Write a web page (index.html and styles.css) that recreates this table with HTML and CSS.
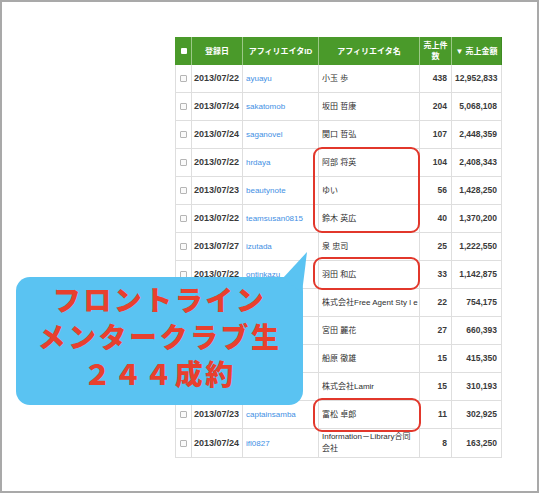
FILE: index.html
```html
<!DOCTYPE html>
<html lang="ja">
<head>
<meta charset="utf-8">
<link rel="stylesheet" href="styles.css">
</head>
<body>
<div class="frame">
  <table class="sales">
    <thead>
      <tr>
        <th class="c-chk"><span class="hbox"></span></th>
        <th class="c-date">登録日</th>
        <th class="c-id">アフィリエイタID</th>
        <th class="c-name">アフィリエイタ名</th>
        <th class="c-cnt">売上件数</th>
        <th class="c-amt">▼ 売上金額</th>
      </tr>
    </thead>
    <tbody>
      <tr><td class="chk"><span class="box"></span></td><td class="date">2013/07/22</td><td class="id"><a>ayuayu</a></td><td class="name">小玉 歩</td><td class="num">438</td><td class="num">12,952,833</td></tr>
      <tr><td class="chk"><span class="box"></span></td><td class="date">2013/07/24</td><td class="id"><a>sakatomob</a></td><td class="name">坂田 哲康</td><td class="num">204</td><td class="num">5,068,108</td></tr>
      <tr><td class="chk"><span class="box"></span></td><td class="date">2013/07/24</td><td class="id"><a>saganovel</a></td><td class="name">関口 哲弘</td><td class="num">107</td><td class="num">2,448,359</td></tr>
      <tr><td class="chk"><span class="box"></span></td><td class="date">2013/07/22</td><td class="id"><a>hrdaya</a></td><td class="name">阿部 将英</td><td class="num">104</td><td class="num">2,408,343</td></tr>
      <tr><td class="chk"><span class="box"></span></td><td class="date">2013/07/23</td><td class="id"><a>beautynote</a></td><td class="name">ゆい</td><td class="num">56</td><td class="num">1,428,250</td></tr>
      <tr><td class="chk"><span class="box"></span></td><td class="date">2013/07/22</td><td class="id"><a>teamsusan0815</a></td><td class="name">鈴木 英広</td><td class="num">40</td><td class="num">1,370,200</td></tr>
      <tr><td class="chk"><span class="box"></span></td><td class="date">2013/07/27</td><td class="id"><a>izutada</a></td><td class="name">泉 忠司</td><td class="num">25</td><td class="num">1,222,550</td></tr>
      <tr><td class="chk"><span class="box"></span></td><td class="date">2013/07/22</td><td class="id"><a>ontinkazu</a></td><td class="name">羽田 和広</td><td class="num">33</td><td class="num">1,142,875</td></tr>
      <tr><td class="chk"><span class="box"></span></td><td class="date">2013/07/23</td><td class="id"><a>freeagent</a></td><td class="name">株式会社Free Agent Sty l e</td><td class="num">22</td><td class="num">754,175</td></tr>
      <tr><td class="chk"><span class="box"></span></td><td class="date">2013/07/24</td><td class="id"><a>miyata</a></td><td class="name">宮田 麗花</td><td class="num">27</td><td class="num">660,393</td></tr>
      <tr><td class="chk"><span class="box"></span></td><td class="date">2013/07/22</td><td class="id"><a>funahara</a></td><td class="name">船原 徹雄</td><td class="num">15</td><td class="num">415,350</td></tr>
      <tr><td class="chk"><span class="box"></span></td><td class="date">2013/07/25</td><td class="id"><a>lamir</a></td><td class="name">株式会社Lamir</td><td class="num">15</td><td class="num">310,193</td></tr>
      <tr><td class="chk"><span class="box"></span></td><td class="date">2013/07/23</td><td class="id"><a>captainsamba</a></td><td class="name">富松 卓郎</td><td class="num">11</td><td class="num">302,925</td></tr>
      <tr class="last"><td class="chk"><span class="box"></span></td><td class="date">2013/07/24</td><td class="id"><a>ifl0827</a></td><td class="name">Information－Library合同<br>会社</td><td class="num">8</td><td class="num">163,250</td></tr>
    </tbody>
  </table>

  <div class="mark mark-1"></div>
  <div class="mark mark-2"></div>
  <div class="mark mark-3"></div>

  <div class="bubble">
    <p class="bubble-line">フロントライン</p>
    <p class="bubble-line">メンタークラブ生</p>
    <p class="bubble-line">２４４成約</p>
  </div>
</div>
</body>
</html>
```

FILE: styles.css
```css
html, body {
  margin: 0;
  padding: 0;
  background: #fff;
}

.frame {
  position: relative;
  width: 539px;
  height: 493px;
  box-sizing: border-box;
  border: 2px solid #a9a9a9;
  padding: 35px 0 0 173px;
  background: #fff;
  overflow: hidden;
}

.sales {
  border-collapse: separate;
  border-spacing: 0;
  table-layout: fixed;
  width: 327px;
  font-family: "Liberation Sans", "Noto Sans CJK JP", sans-serif;
  font-size: 8px;
  line-height: 11px;
  color: #333;
}

.sales thead tr {
  height: 28px;
}

.sales th {
  box-sizing: border-box;
  background: #4a9a2a;
  color: #fff;
  font-weight: bold;
  text-align: center;
  vertical-align: middle;
  padding: 0 2px;
  border-right: 1px solid #9cc987;
}

.sales th:first-child {
  border-left: 1px solid #4a9a2a;
}

.sales th:last-child {
  border-right: 1px solid #3f8a22;
}

.c-chk { width: 17px; }
.c-date { width: 51px; }
.c-id { width: 76px; }
.c-name { width: 101px; }
.c-cnt { width: 32px; }
.c-amt { width: 50px; }

.hbox {
  display: inline-block;
  width: 6px;
  height: 6px;
  background: #fff;
  border-radius: 1px;
  vertical-align: middle;
}

.sales tbody tr {
  height: 28px;
}

.sales tbody tr.last {
  height: 29px;
}

.sales td {
  padding: 0 3px;
  vertical-align: middle;
  border-right: 1px solid #dedede;
  border-bottom: 1px solid #dedede;
  white-space: nowrap;
}

.sales td:first-child {
  border-left: 1px solid #dedede;
}

.sales td.chk {
  text-align: center;
  padding: 0;
}

.box {
  display: inline-block;
  width: 5px;
  height: 5px;
  border: 1px solid #b5b5b5;
  border-radius: 1px;
  background: #fafafa;
  vertical-align: middle;
}

.sales td.date {
  font-size: 9px;
  font-weight: bold;
  color: #3a3a3a;
  padding-left: 2px;
}

.sales td.id a {
  color: #3f8fe4;
  text-decoration: none;
}

.sales td.name {
  color: #2e2e2e;
}

.sales tr.last td.name {
  white-space: normal;
  line-height: 12px;
}

.sales td.num {
  text-align: right;
  padding-right: 4px;
  font-size: 8.5px;
  font-weight: bold;
  color: #3a3a3a;
}

.mark {
  position: absolute;
  box-sizing: border-box;
  border: 2px solid #e2372b;
  border-radius: 9px;
}

.mark-1 { left: 311px; top: 145px; width: 107px; height: 86px; }
.mark-2 { left: 311px; top: 255px; width: 107px; height: 33px; }
.mark-3 { left: 311px; top: 396px; width: 108px; height: 34px; }

.bubble {
  position: absolute;
  left: 14px;
  top: 275px;
  width: 287px;
  height: 128px;
  box-sizing: border-box;
  padding-top: 4px;
  background: #5ac3f2;
  border-radius: 14px;
  text-align: center;
}

.bubble::before {
  content: "";
  position: absolute;
  left: 262px;
  top: -26px;
  width: 30px;
  height: 44px;
  background: #5ac3f2;
  clip-path: polygon(5px 27px, 29px 1px, 24px 42px);
}

.bubble-line {
  position: relative;
  margin: 0;
  font-family: "Noto Sans CJK JP", sans-serif;
  font-weight: 900;
  font-size: 28px;
  line-height: 37px;
  letter-spacing: 2.5px;
  color: #e8402e;
  white-space: nowrap;
}
```
